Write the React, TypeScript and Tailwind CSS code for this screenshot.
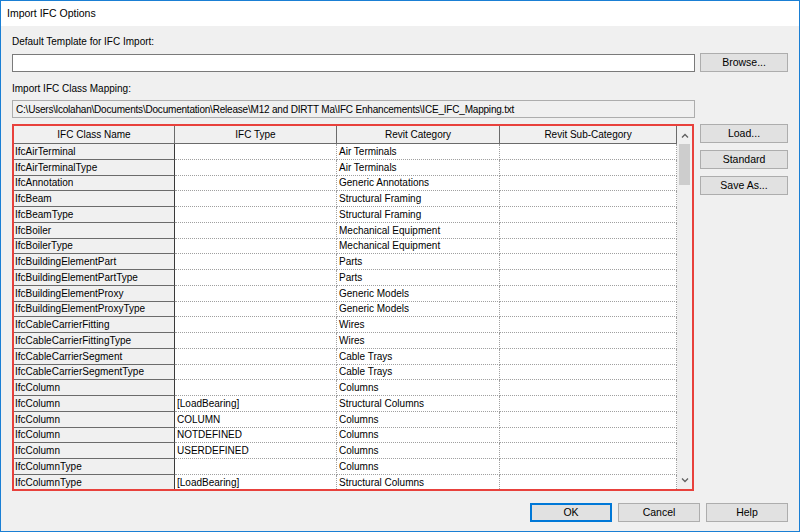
import React from 'react';

const rows: [string, string, string][] = [
  ['IfcAirTerminal', '', 'Air Terminals'],
  ['IfcAirTerminalType', '', 'Air Terminals'],
  ['IfcAnnotation', '', 'Generic Annotations'],
  ['IfcBeam', '', 'Structural Framing'],
  ['IfcBeamType', '', 'Structural Framing'],
  ['IfcBoiler', '', 'Mechanical Equipment'],
  ['IfcBoilerType', '', 'Mechanical Equipment'],
  ['IfcBuildingElementPart', '', 'Parts'],
  ['IfcBuildingElementPartType', '', 'Parts'],
  ['IfcBuildingElementProxy', '', 'Generic Models'],
  ['IfcBuildingElementProxyType', '', 'Generic Models'],
  ['IfcCableCarrierFitting', '', 'Wires'],
  ['IfcCableCarrierFittingType', '', 'Wires'],
  ['IfcCableCarrierSegment', '', 'Cable Trays'],
  ['IfcCableCarrierSegmentType', '', 'Cable Trays'],
  ['IfcColumn', '', 'Columns'],
  ['IfcColumn', '[LoadBearing]', 'Structural Columns'],
  ['IfcColumn', 'COLUMN', 'Columns'],
  ['IfcColumn', 'NOTDEFINED', 'Columns'],
  ['IfcColumn', 'USERDEFINED', 'Columns'],
  ['IfcColumnType', '', 'Columns'],
  ['IfcColumnType', '[LoadBearing]', 'Structural Columns'],
];

function WinButton({ label, className = '' }: { label: string; className?: string }) {
  return (
    <button className={`h-[19px] bg-[#e1e1e1] border border-[#adadad] text-[10.5px] text-black flex items-center justify-center ${className}`}>
      {label}
    </button>
  );
}

export default function App() {
  return (
    <div
      className="w-[800px] h-[532px] border border-[#1a7fd4] bg-[#f0f0f0] flex flex-col text-black text-[10px] overflow-hidden"
      style={{ fontFamily: '"Liberation Sans", Arial, sans-serif' }}
    >
      {/* title bar */}
      <div className="h-[25px] bg-white flex items-center px-[6px] text-[10.5px] shrink-0">Import IFC Options</div>

      <div className="flex-1 flex flex-col px-[11px] pt-[8px]">
        <div className="h-[15px] leading-[15px]">Default Template for IFC Import:</div>
        <div className="flex items-center mt-[4px] h-[19px]">
          <div className="w-[684px] h-[18px] bg-white border border-[#7a7a7a]" />
          <WinButton label="Browse..." className="w-[88px] ml-[5px]" />
        </div>

        <div className="h-[15px] leading-[15px] mt-[9px]">Import IFC Class Mapping:</div>
        <div className="w-[683px] h-[18px] mt-[4px] border border-[#adadad] bg-[#f0f0f0] flex items-center px-[3px] whitespace-nowrap overflow-hidden tracking-[-0.2px]">
          C:\Users\lcolahan\Documents\Documentation\Release\M12 and DIRTT Ma\IFC Enhancements\ICE_IFC_Mapping.txt
        </div>

        <div className="flex mt-[6px]">
          {/* grid */}
          <div className="w-[683px] h-[367px] border-2 border-[#e8413c] bg-white flex overflow-hidden">
            <div className="w-[664px] flex flex-col">
              <div className="h-[18px] flex shrink-0 bg-[#f0f0f0] border-b border-[#6b6b6b]">
                <div className="w-[161px] border-r border-[#6b6b6b] flex items-center justify-center">IFC Class Name</div>
                <div className="w-[162px] border-r border-[#6b6b6b] flex items-center justify-center">IFC Type</div>
                <div className="w-[163px] border-r border-[#6b6b6b] flex items-center justify-center">Revit Category</div>
                <div className="flex-1 border-r border-[#6b6b6b] flex items-center justify-center">Revit Sub-Category</div>
              </div>
              <div className="flex-1 overflow-hidden">
                {rows.map(([name, type, cat], i) => (
                  <div key={i} className="h-[15.75px] flex whitespace-nowrap">
                    <div className="w-[161px] bg-[#f0f0f0] border-r border-b border-r-[#3a3a3a] border-b-[#6b6b6b] px-[1px] flex items-center">{name}</div>
                    <div className="w-[162px] border-r border-b border-dotted border-[#a0a0a0] px-[2px] flex items-center">{type}</div>
                    <div className="w-[163px] border-r border-b border-dotted border-[#a0a0a0] px-[2px] flex items-center">{cat}</div>
                    <div className="flex-1 border-r border-b border-dotted border-[#a0a0a0]" />
                  </div>
                ))}
              </div>
            </div>
            {/* scrollbar */}
            <div className="w-[15px] bg-[#f0f0f0] flex flex-col items-center">
              <div className="h-[18px] w-full flex items-center justify-center">
                <svg width="8" height="5" viewBox="0 0 8 5"><path d="M1 4.5 L4 1.5 L7 4.5" fill="none" stroke="#606060" strokeWidth="1.3" /></svg>
              </div>
              <div className="w-[11px] h-[41px] bg-[#cdcdcd]" />
              <div className="flex-1" />
              <div className="h-[17px] w-full flex items-center justify-center">
                <svg width="8" height="5" viewBox="0 0 8 5"><path d="M1 0.5 L4 3.5 L7 0.5" fill="none" stroke="#606060" strokeWidth="1.3" /></svg>
              </div>
            </div>
          </div>

          {/* side buttons */}
          <div className="flex flex-col ml-[6px] gap-[7px]">
            <WinButton label="Load..." className="w-[88px]" />
            <WinButton label="Standard" className="w-[88px]" />
            <WinButton label="Save As..." className="w-[88px]" />
          </div>
        </div>

        <div className="flex justify-end gap-[6px] mt-[12px]">
          <button className="w-[82px] h-[19px] bg-[#e1e1e1] border-2 border-[#0078d7] text-[10.5px] flex items-center justify-center">OK</button>
          <WinButton label="Cancel" className="w-[82px]" />
          <WinButton label="Help" className="w-[82px]" />
        </div>
      </div>
    </div>
  );
}
